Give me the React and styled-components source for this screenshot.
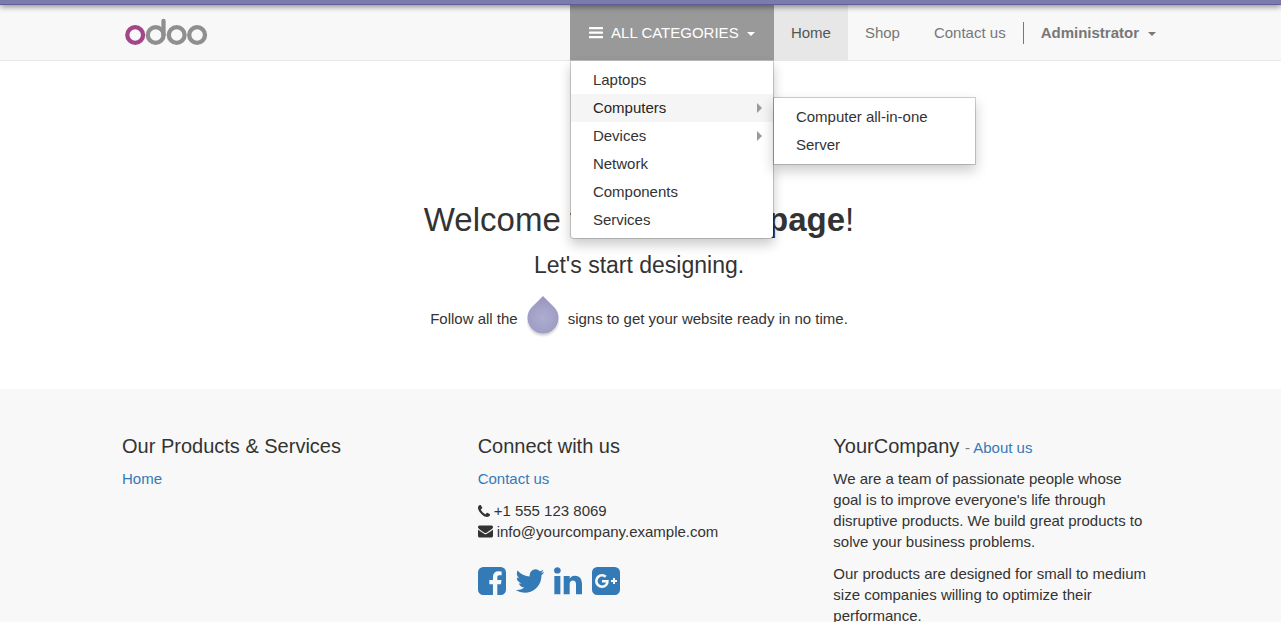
import React from "react";
import styled, { createGlobalStyle } from "styled-components";

const GlobalStyle = createGlobalStyle`
  * { box-sizing: border-box; }
  body {
    margin: 0;
    background: #fff;
    color: #333;
    font: 15px/21px "Liberation Sans", Arial, sans-serif;
  }
  ul { list-style: none; margin: 0; padding: 0; }
  a { color: #337ab7; text-decoration: none; }
  svg { display: block; }
`;

const TopStrip = styled.div`
  position: relative;
  z-index: 3;
  height: 5px;
  background: #7c7bad;
  border-bottom: 1px solid #5f5e97;
  box-shadow: 0 1px 6px rgba(0, 0, 0, 0.6);
`;

const Container = styled.div`
  max-width: 1067px;
  margin: 0 auto;
  padding: 0 15px;
`;

const Header = styled.header`
  background: #f8f8f8;
  border-bottom: 1px solid #e7e7e7;
`;

const NavBar = styled(Container)`
  display: flex;
  justify-content: space-between;
  align-items: stretch;
  height: 55px;
  padding-right: 1px;
`;

const Brand = styled.a`
  display: flex;
  align-items: center;
  padding-left: 2px;
`;

const NavList = styled.ul`
  display: flex;
`;

const NavItem = styled.li`
  position: relative;
  display: flex;
  align-items: stretch;
  width: ${(p) => p.$width || "auto"};
`;

const NavLink = styled.a`
  display: flex;
  align-items: center;
  padding: 0 17px;
  white-space: nowrap;
  color: ${(p) => (p.$active ? "#555" : "#777")};
  background: ${(p) => (p.$active ? "#e7e7e7" : "transparent")};
`;

const NavButton = styled.button`
  display: flex;
  flex: 1;
  align-items: center;
  justify-content: ${(p) => (p.$solid ? "center" : "flex-start")};
  gap: ${(p) => (p.$solid ? "8px" : "9px")};
  padding: 0 17px;
  border: 0;
  font: inherit;
  font-weight: ${(p) => (p.$solid ? 400 : 700)};
  white-space: nowrap;
  color: ${(p) => (p.$solid ? "#fff" : "#777")};
  background: ${(p) => (p.$solid ? "#999" : "transparent")};
`;

const Divider = styled.li`
  align-self: center;
  width: 1px;
  height: 22px;
  background: #777;
`;

const Caret = styled.span`
  border-top: 4px solid;
  border-left: 4px solid transparent;
  border-right: 4px solid transparent;
  margin-top: 2px;
`;

const Menu = styled.ul`
  position: absolute;
  z-index: ${(p) => (p.$sub ? 3 : 2)};
  top: ${(p) => (p.$sub ? "3px" : "100%")};
  left: ${(p) => (p.$sub ? "100%" : "0")};
  width: ${(p) => (p.$sub ? "203px" : "100%")};
  padding: 5px 0 ${(p) => (p.$sub ? "5px" : "4px")};
  background: #fff;
  background-clip: padding-box;
  border: 1px solid rgba(0, 0, 0, 0.18);
  border-radius: ${(p) => (p.$sub ? "0" : "0 0 4px 4px")};
  box-shadow: 0 6px 12px rgba(0, 0, 0, 0.2);
`;

const MenuItem = styled.li`
  position: relative;
`;

const MenuLink = styled.a`
  display: flex;
  align-items: center;
  justify-content: space-between;
  height: 28px;
  padding: 0 11px 1px 22px;
  color: ${(p) => (p.$hover ? "#262626" : "#333")};
  background: ${(p) => (p.$hover ? "#f5f5f5" : "transparent")};
`;

const Arrow = styled.span`
  border-left: 5px solid #9a98a0;
  border-top: 5px solid transparent;
  border-bottom: 5px solid transparent;
`;

const Hero = styled.main`
  padding: 139px 18px 49px 15px;
  text-align: center;
`;

const HeroTitle = styled.h1`
  margin: 0;
  font-size: 33px;
  line-height: 40px;
  font-weight: 400;
`;

const HeroSubtitle = styled.h2`
  margin: 11px 0 17px;
  font-size: 23px;
  line-height: 28px;
  font-weight: 400;
`;

const HeroText = styled.p`
  display: flex;
  justify-content: center;
  align-items: center;
  gap: 9px;
  margin: 0;
`;

const Footer = styled.footer`
  background: #f8f8f8;
  padding: 46px 0 40px;
`;

const FooterGrid = styled(Container)`
  display: grid;
  grid-template-columns: repeat(3, 1fr);
  column-gap: 30px;
`;

const FooterTitle = styled.h3`
  margin: 0 0 11px;
  font-size: 20px;
  line-height: 22px;
  font-weight: 400;

  small { font-size: 15px; line-height: 15px; color: #777; }
`;

const Paragraph = styled.p`
  margin: 0 0 11px;
  padding-right: 8px;
`;

const ContactList = styled.ul`
  margin-bottom: 25px;
`;

const ContactRow = styled.li`
  display: flex;
  align-items: center;
  gap: 4px;
`;

const SocialRow = styled.div`
  display: flex;
  gap: 10px;

  svg { overflow: visible; }
`;

const Logo = () => (
  <svg width="84" height="31" viewBox="0 0 84 31" fill="none" strokeWidth="4.3" role="img" aria-label="odoo">
    <g stroke="#8f8f8f" strokeLinecap="round">
      <circle cx="31.7" cy="18" r="7.9" />
      <path d="M39.5 18V4" />
      <circle cx="52.7" cy="18" r="7.9" />
      <circle cx="73.1" cy="18" r="7.9" />
    </g>
    <circle cx="11.2" cy="18" r="7.9" stroke="#a24689" />
  </svg>
);

const Bars = () => (
  <svg width="14" height="12" viewBox="0 0 14 12" fill="currentColor" aria-hidden="true">
    <rect width="14" height="2.2" rx=".5" />
    <rect y="4.5" width="14" height="2.2" rx=".5" />
    <rect y="9" width="14" height="2.2" rx=".5" />
  </svg>
);

const Drop = () => (
  <svg width="32" height="44" viewBox="0 0 32 44" role="img" aria-label="drop">
    <defs>
      <radialGradient id="dropFill" gradientUnits="userSpaceOnUse" cx="16" cy="22" r="20">
        <stop offset="0" stopColor="#aeadcf" />
        <stop offset="1" stopColor="#9a98c2" />
      </radialGradient>
      <filter id="dropShadow" x="-20%" y="-20%" width="140%" height="150%">
        <feDropShadow dx="0" dy="2" stdDeviation="1" floodColor="#000" floodOpacity=".2" />
      </filter>
    </defs>
    <path
      d="M16 .1L27 11A15.5 15.5 0 1 1 5 11Z"
      fill="url(#dropFill)"
      filter="url(#dropShadow)"
    />
  </svg>
);

const icons = {
  phone: "M1600 1240q0 27-10 70.5t-21 68.5q-21 50-122 106-94 51-186 51-27 0-53-3.5t-57.5-12.5-47-14.5-55.5-20.5-49-18q-98-35-175-83-127-79-264-216t-216-264q-48-77-83-175-3-9-18-49t-20.5-55.5-14.5-47-12.5-57.5-3.5-53q0-92 51-186 56-101 106-122 25-11 68.5-21t70.5-10q14 0 21 3 18 6 53 76 11 19 30 54t35 63.5 31 53.5q3 4 17.5 25t21.5 35.5 7 28.5q0 20-28.5 50t-62 55-62 53-28.5 46q0 9 5 22.5t8.5 20.5 14 24 11.5 19q76 137 174 235t235 174q2 1 19 11.5t24 14 20.5 8.5 22.5 5q18 0 46-28.5t53-62 55-62 50-28.5q14 0 28.5 7t35.5 21.5 25 17.5q25 15 53.5 31t63.5 35 54 30q70 35 76 53 3 7 3 21z",
  envelope: "M1792 710v794q0 66-47 113t-113 47h-1472q-66 0-113-47t-47-113v-794q44 49 101 87 362 246 497 345 57 42 92.5 65.5t94.5 48 110 24.5h2q51 0 110-24.5t94.5-48 92.5-65.5q170-123 498-345 57-39 100-87zm0-294q0 79-49 151t-122 123q-376 261-468 325-10 7-42.5 31t-54 38.5-52 32.5-57.5 27-50 9h-2q-23 0-50-9t-57.5-27-52-32.5-54-38.5-42.5-31q-91-64-262-182.5t-205-142.5q-62-42-117-115.5t-55-136.5q0-78 41.5-130t118.5-52h1472q65 0 112.5 47t47.5 113z",
};

const social = [
  ["Facebook", "M1376 128q119 0 203.5 84.5t84.5 203.5v960q0 119-84.5 203.5t-203.5 84.5h-188v-595h199l30-232h-229v-148q0-56 23.5-84t91.5-28l122-1v-207q-63-9-178-9-136 0-217.5 80t-81.5 226v171h-200v232h200v595h-532q-119 0-203.5-84.5t-84.5-203.5v-960q0-119 84.5-203.5t203.5-84.5h960z"],
  ["Twitter", "M1684 408q-67 98-162 167 1 14 1 42 0 130-38 259.5t-115.5 248.5-184.5 210.5-258 146-323 54.5q-271 0-496-145 35 4 78 4 225 0 401-138-105-2-188-64.5t-114-159.5q33 5 61 5 43 0 85-11-112-23-185.5-111.5t-73.5-205.5v-4q68 38 146 41-66-44-105-115t-39-154q0-88 44-163 121 149 294.5 238.5t371.5 99.5q-8-38-8-74 0-134 94.5-228.5t228.5-94.5q140 0 236 102 109-21 205-78-37 115-142 178 93-10 186-50z"],
  ["LinkedIn", "M477 625v991h-330v-991h330zm21-306q1 73-50.5 122t-135.5 49h-2q-82 0-132-49t-50-122q0-74 51.5-122.5t134.5-48.5 133 48.5 51 122.5zm1166 729v568h-329v-530q0-105-40.5-164.5t-126.5-59.5q-63 0-105.5 34.5t-63.5 85.5q-11 30-11 81v553h-329q2-399 2-647t-1-296l-1-48h329v144h-2q20-32 41-56t56.5-52 87-43.5 114.5-15.5q171 0 275 113.5t104 332.5z"],
  ["Google Plus", "M1045 905q0-26-6-64h-362v132h217q-3 24-16.5 50t-37.5 53-66.5 44.5-96.5 17.5q-99 0-169-71t-70-171 70-171 169-71q92 0 153 59l104-101q-108-100-257-100-160 0-272 112.5t-112 271.5 112 271.5 272 112.5q165 0 266.5-105t101.5-270zm345 46h109v-110h-109v-110h-110v110h-110v110h110v110h110v-110zm274-535v960q0 119-84.5 203.5t-203.5 84.5h-960q-119 0-203.5-84.5t-84.5-203.5v-960q0-119 84.5-203.5t203.5-84.5h960q119 0 203.5 84.5t84.5 203.5z"],
];

const categories = [
  { name: "Laptops" },
  { name: "Computers", open: true, children: ["Computer all-in-one", "Server"] },
  { name: "Devices", more: true },
  { name: "Network" },
  { name: "Components" },
  { name: "Services" },
];

export default function App() {
  return (
    <>
      <GlobalStyle />
      <TopStrip />
      <Header>
        <NavBar as="nav">
          <Brand href="#"><Logo /></Brand>
          <NavList>
            <NavItem $width="204px">
              <NavButton $solid type="button" aria-expanded="true">
                <Bars />ALL CATEGORIES<Caret />
              </NavButton>
              <Menu>
                {categories.map((c) => (
                  <MenuItem key={c.name}>
                    <MenuLink href="#" $hover={c.open}>
                      {c.name}
                      {(c.children || c.more) && <Arrow />}
                    </MenuLink>
                    {c.children && (
                      <Menu $sub>
                        {c.children.map((s) => (
                          <MenuItem key={s}><MenuLink href="#">{s}</MenuLink></MenuItem>
                        ))}
                      </Menu>
                    )}
                  </MenuItem>
                ))}
              </Menu>
            </NavItem>
            <NavItem><NavLink href="#" $active>Home</NavLink></NavItem>
            <NavItem><NavLink href="#">Shop</NavLink></NavItem>
            <NavItem><NavLink href="#">Contact us</NavLink></NavItem>
            <Divider />
            <NavItem>
              <NavButton type="button">Administrator<Caret /></NavButton>
            </NavItem>
          </NavList>
        </NavBar>
      </Header>
      <Hero>
        <HeroTitle>Welcome to your <b>homepage</b>!</HeroTitle>
        <HeroSubtitle>Let's start designing.</HeroSubtitle>
        <HeroText>
          <span>Follow all the</span>
          <Drop />
          <span>signs to get your website ready in no time.</span>
        </HeroText>
      </Hero>
      <Footer>
        <FooterGrid>
          <section>
            <FooterTitle>Our Products &amp; Services</FooterTitle>
            <a href="#">Home</a>
          </section>
          <section>
            <FooterTitle>Connect with us</FooterTitle>
            <Paragraph><a href="#">Contact us</a></Paragraph>
            <ContactList>
              <ContactRow>
                <svg width="12" height="12" viewBox="192 128 1408 1408" fill="currentColor" aria-hidden="true"><path d={icons.phone} /></svg>
                +1 555 123 8069
              </ContactRow>
              <ContactRow>
                <svg width="15" height="13" viewBox="0 192 1792 1536" fill="currentColor" aria-hidden="true"><path d={icons.envelope} /></svg>
                info@yourcompany.example.com
              </ContactRow>
            </ContactList>
            <SocialRow>
              {social.map(([name, d]) => (
                <a key={name} href="#" aria-label={name}>
                  <svg width="28" height="28" viewBox="128 128 1536 1536" fill="currentColor" fillRule="evenodd"><path d={d} /></svg>
                </a>
              ))}
            </SocialRow>
          </section>
          <section>
            <FooterTitle>YourCompany <small>- <a href="#">About us</a></small></FooterTitle>
            <Paragraph>
              We are a team of passionate people whose goal is to improve everyone's life
              through disruptive products. We build great products to solve your business problems.
            </Paragraph>
            <Paragraph>
              Our products are designed for small to medium size companies willing to
              optimize their performance.
            </Paragraph>
          </section>
        </FooterGrid>
      </Footer>
    </>
  );
}
